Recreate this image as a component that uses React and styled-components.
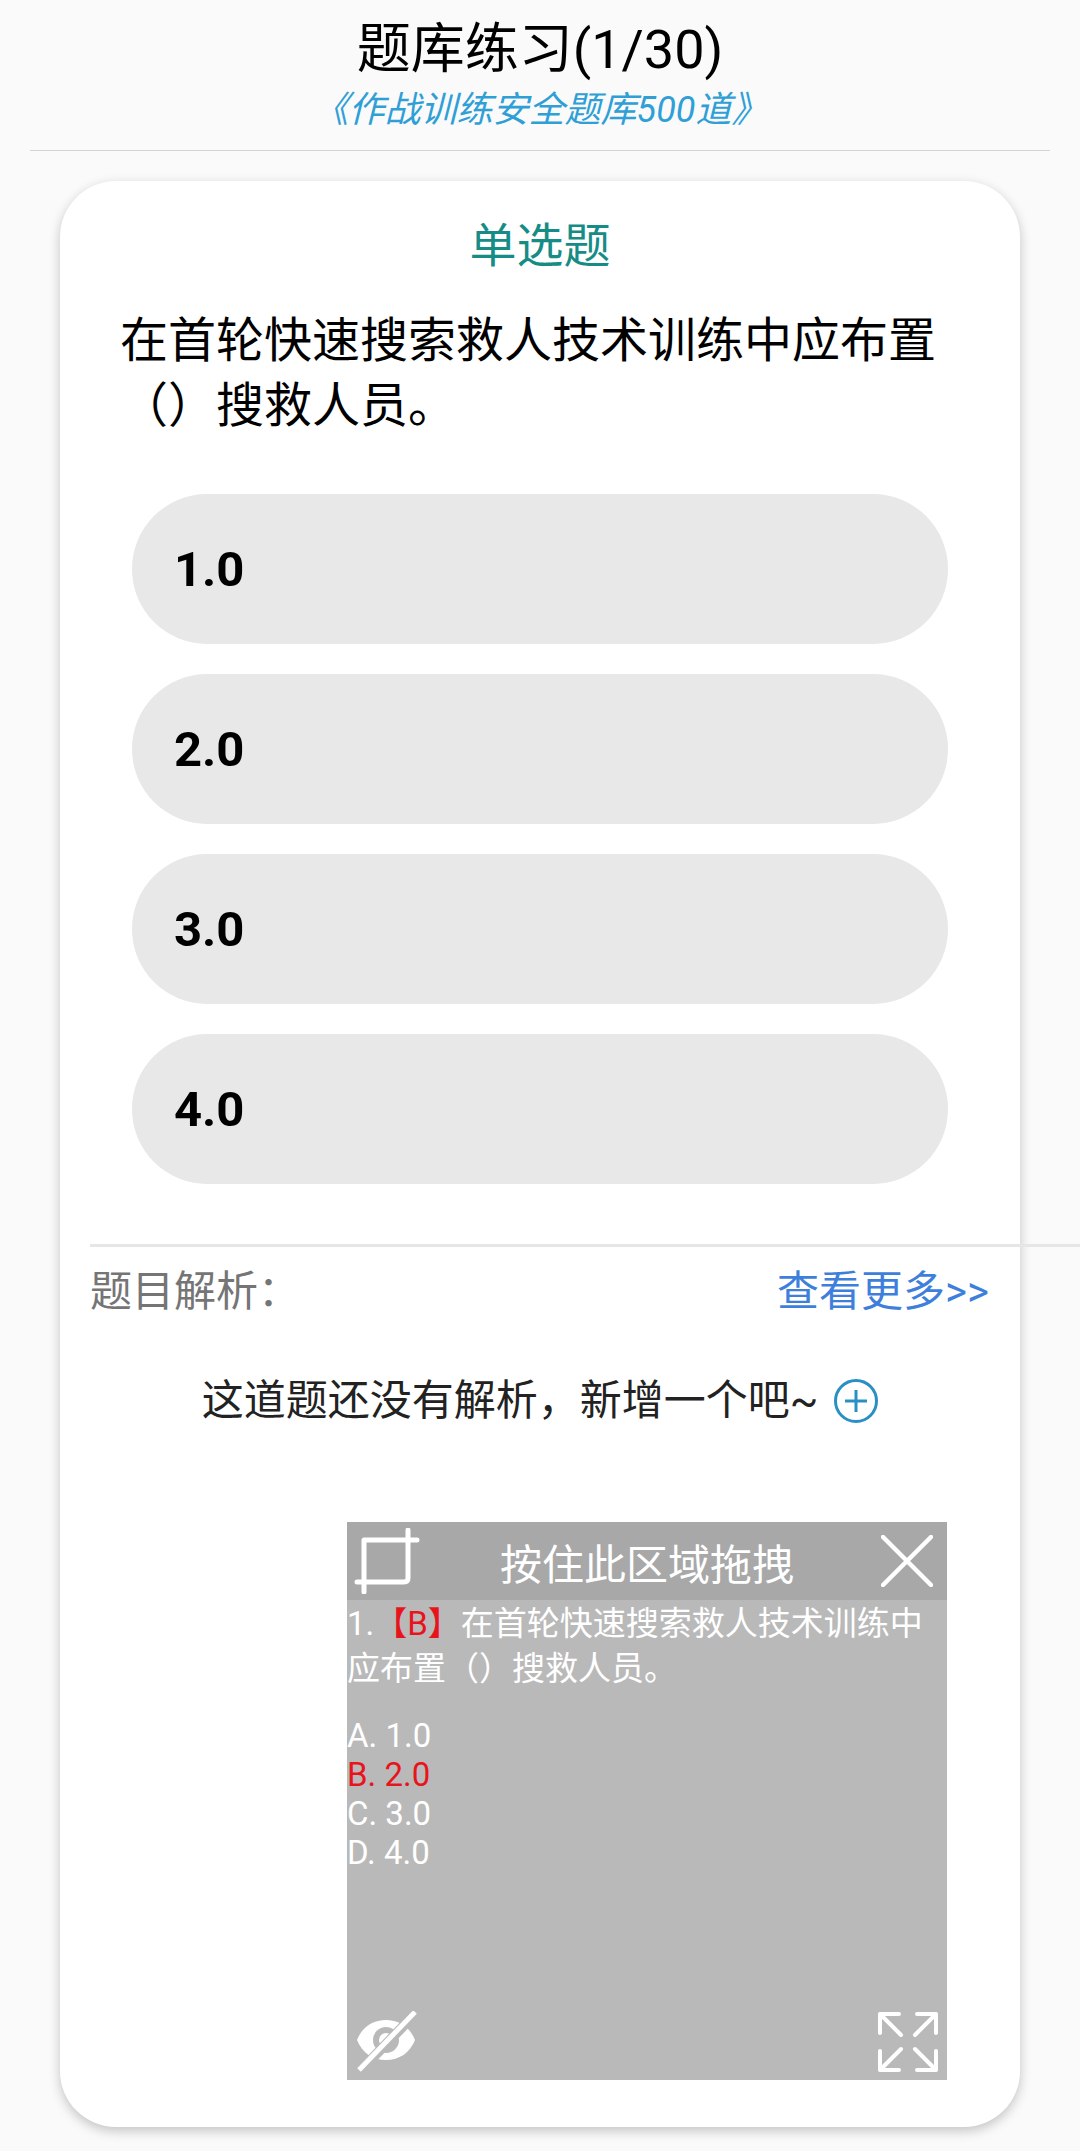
import styled, { createGlobalStyle } from 'styled-components'

const FONT = `Roboto, "Noto Sans CJK SC", sans-serif`

const GlobalStyle = createGlobalStyle`
	html, body {
		margin: 0;
		padding: 0;
		background: #fafafa;
		overflow-x: hidden;
	}
	* {
		box-sizing: border-box;
	}
`

const Page = styled.div`
	width: 1080px;
	height: 2151px;
	overflow: hidden;
	font-family: ${FONT};
	color: #000;
`

const Header = styled.header`
	margin: 0 30px;
	padding: 20px 0 15px;
	border-bottom: 1px solid #d4d4d4;
	text-align: center;
`

const Title = styled.h1`
	margin: 0;
	font-size: 54px;
	line-height: 60px;
	font-weight: 400;
`

const Subtitle = styled.div`
	margin-top: 5px;
	font-size: 36px;
	line-height: 50px;
	font-style: italic;
	color: #2f9fd6;
`

const Card = styled.main`
	position: relative;
	width: 960px;
	height: 1946px;
	margin: 30px 0 0 60px;
	padding-top: 35px;
	background: #fff;
	border-radius: 56px;
	box-shadow: 0 4px 12px rgba(0, 0, 0, 0.22);
`

const QuestionType = styled.div`
	font-size: 47px;
	line-height: 60px;
	text-align: center;
	color: #158c86;
`

const Question = styled.p`
	margin: 32px 60px 0;
	font-size: 48px;
	line-height: 65px;
`

const Options = styled.div`
	display: flex;
	flex-direction: column;
	gap: 30px;
	margin: 56px 72px 0;
`

const Option = styled.div`
	display: flex;
	align-items: center;
	height: 150px;
	padding-left: 42px;
	border-radius: 75px;
	background: #e8e8e8;
	font-size: 49px;
	font-weight: 700;
`

const Rule = styled.div`
	width: 990px;
	height: 3px;
	margin: 60px 0 0 30px;
	background: #e6e6e6;
`

const AnalysisRow = styled.div`
	display: flex;
	justify-content: space-between;
	align-items: center;
	height: 60px;
	margin: 10px 31px 0 30px;
`

const AnalysisLabel = styled.span`
	font-size: 42px;
	color: #757575;
`

const MoreLink = styled.a`
	font-size: 42px;
	color: #3f7fdc;
`

const EmptyRow = styled.div`
	display: flex;
	justify-content: center;
	align-items: center;
	gap: 16px;
	margin-top: 54px;
	font-size: 42px;
	line-height: 60px;
	color: #222;
`

const Panel = styled.aside`
	position: absolute;
	left: 287px;
	top: 1341px;
	display: flex;
	flex-direction: column;
	width: 600px;
	height: 558px;
	background: #b9b9b9;
	color: #fff;
`

const PanelHeader = styled.div`
	display: grid;
	grid-template-columns: 1fr auto 1fr;
	align-items: center;
	height: 78px;
	padding: 0 14px;
	background: #a8a8a8;
	font-size: 42px;
`

const PanelCrop = styled.svg`
	margin-left: -7px;
`

const PanelClose = styled.svg`
	justify-self: end;
`

const PanelBody = styled.div`
	flex: 1;
	padding-top: 1px;
	font-size: 33px;
`

const PanelQuestion = styled.p`
	margin: 0 0 25px;
	line-height: 45px;
`

const Answer = styled.strong`
	font-weight: 400;
	color: #e8141c;
`

const PanelOption = styled.div`
	height: 39px;
	line-height: 39px;
	color: ${({ $correct }) => ($correct ? '#e8141c' : '#fff')};
`

const PanelFooter = styled.div`
	display: flex;
	justify-content: space-between;
	align-items: center;
	padding: 0 9px 7px 10px;
`

function CropIcon() {
	return (
		<PanelCrop width="66" height="66" viewBox="0 0 66 66" fill="none" stroke="#fff" strokeWidth="5" strokeLinecap="round" strokeLinejoin="round">
			<path d="M10 64V12H63" />
			<path d="M54 2V50Q54 54 50 54H3" />
		</PanelCrop>
	)
}

function CloseIcon() {
	return (
		<PanelClose width="52" height="52" viewBox="0 0 52 52" fill="none" stroke="#fff" strokeWidth="4.5" strokeLinecap="round">
			<path d="M2 2L50 50M50 2L2 50" />
		</PanelClose>
	)
}

function EyeOffIcon() {
	return (
		<svg width="62" height="62" viewBox="0 0 62 62">
			<path
				fillRule="evenodd"
				fill="#fff"
				d="M0 29C5 16 16 9 29 9S53 16 58 29C53 42 42 49 29 49S5 42 0 29ZM29 16A13 13 0 1 0 29 42A13 13 0 1 0 29 16Z"
			/>
			<circle cx="29" cy="29" r="7" fill="#fff" />
			<path d="M59 2L3 60" stroke="#b9b9b9" strokeWidth="10" />
			<path d="M58 1L2 59" stroke="#fff" strokeWidth="5" />
		</svg>
	)
}

function ExpandIcon() {
	return (
		<svg width="60" height="60" viewBox="0 0 60 60" fill="none" stroke="#fff" strokeWidth="4" strokeLinecap="round" strokeLinejoin="round">
			<path d="M2 21V2H21M2 2L23 23" />
			<path d="M58 21V2H39M58 2L37 23" />
			<path d="M2 39V58H21M2 58L23 37" />
			<path d="M58 39V58H39M58 58L37 37" />
		</svg>
	)
}

function PlusCircleIcon() {
	return (
		<svg width="44" height="44" viewBox="0 0 44 44" fill="none" stroke="#2a8fc4" strokeWidth="3">
			<circle cx="22" cy="22" r="20.5" />
			<path d="M22 11V33M11 22H33" />
		</svg>
	)
}

const options = ['1.0', '2.0', '3.0', '4.0']
const panelOptions = ['A. 1.0', 'B. 2.0', 'C. 3.0', 'D. 4.0']

function App() {
	return (
		<Page>
			<GlobalStyle />
			<Header>
				<Title>题库练习(1/30)</Title>
				<Subtitle>《作战训练安全题库500道》</Subtitle>
			</Header>
			<Card>
				<QuestionType>单选题</QuestionType>
				<Question>在首轮快速搜索救人技术训练中应布置（）搜救人员。</Question>
				<Options>
					{options.map((option) => (
						<Option key={option}>{option}</Option>
					))}
				</Options>
				<Rule />
				<AnalysisRow>
					<AnalysisLabel>题目解析：</AnalysisLabel>
					<MoreLink>查看更多&gt;&gt;</MoreLink>
				</AnalysisRow>
				<EmptyRow>
					<span>这道题还没有解析，新增一个吧~</span>
					<PlusCircleIcon />
				</EmptyRow>
				<Panel>
					<PanelHeader>
						<CropIcon />
						<span>按住此区域拖拽</span>
						<CloseIcon />
					</PanelHeader>
					<PanelBody>
						<PanelQuestion>
							1.<Answer>【B】</Answer>在首轮快速搜索救人技术训练中应布置（）搜救人员。
						</PanelQuestion>
						{panelOptions.map((option, index) => (
							<PanelOption key={option} $correct={index === 1}>
								{option}
							</PanelOption>
						))}
					</PanelBody>
					<PanelFooter>
						<EyeOffIcon />
						<ExpandIcon />
					</PanelFooter>
				</Panel>
			</Card>
		</Page>
	)
}

export default App
